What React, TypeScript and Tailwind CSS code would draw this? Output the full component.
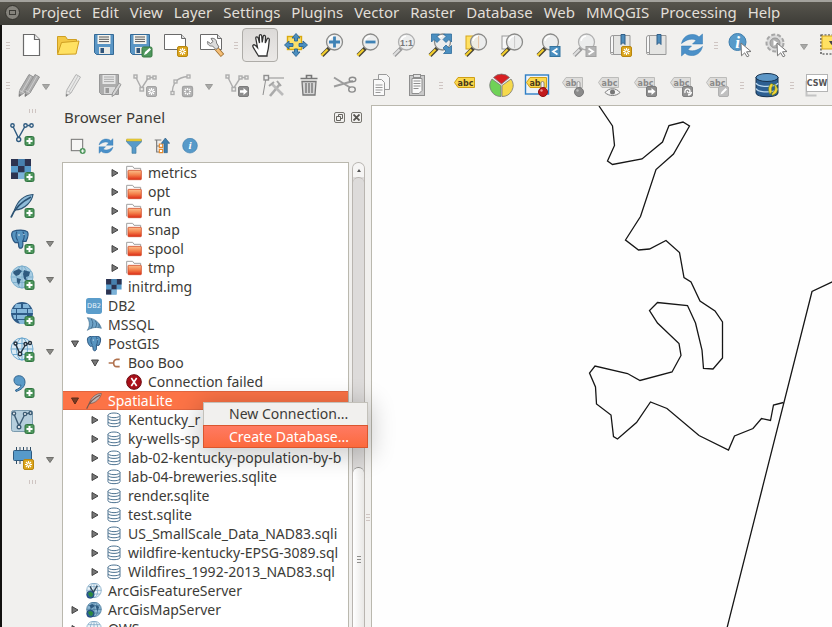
import React from "react";

type Children = { children?: React.ReactNode };

/* ---------- shared icon parts, all drawn on a 24 unit grid ---------- */

function Svg({ children, small }: Children & { small?: boolean }) {
  return (
    <svg viewBox="0 0 24 24" className={small ? "size-4 shrink-0" : "size-6 shrink-0 overflow-visible"} fill="none" aria-hidden="true">
      {children}
    </svg>
  );
}

function PlusBadge() {
  return (
    <g>
      <rect x="15" y="14.5" width="9" height="9" rx="1.5" fill="#4e965c" stroke="#2f7340" />
      <path d="M19.5 16v6M16.500 19h6" stroke="#fff" strokeWidth="2" />
    </g>
  );
}

function StarBadge({ gray }: { gray?: boolean }) {
  return (
    <g>
      <rect x="13.5" y="13.5" width="10" height="10" rx="1.5" fill={gray ? "#b4b4b4" : "#dba51c"} stroke={gray ? "#a3a3a3" : "#b98710"} />
      <path d="M18.5 15v7M15 18.5h7M16 16l5 5M21 16l-5 5" stroke="#fff" strokeWidth="1.1" />
      <circle cx="18.5" cy="18.5" r="1.1" fill={gray ? "#b4b4b4" : "#dba51c"} />
    </g>
  );
}

function ArrowBadge() {
  return (
    <g>
      <rect x="13.5" y="13.5" width="10" height="10" rx="1.5" fill="#8d8d8d" stroke="#7c7c7c" />
      <path d="M15 17.3h3.5v-2.2l4 3.4-4 3.4v-2.2H15z" fill="#fff" />
    </g>
  );
}

function Lens({ gray, children }: Children & { gray?: boolean }) {
  return (
    <g>
      <path d="M9.5 15 2 22.5" stroke={gray ? "#9b9b9b" : "#4a4636"} strokeWidth="4" />
      <path d="M7.5 16.5 1.5 22.5" stroke={gray ? "#dedede" : "#f4cf2c"} strokeWidth="2.2" />
      <circle cx="14.5" cy="9" r="8" fill="#eceded" fillOpacity="0.92" stroke={gray ? "#b0b0b0" : "#8a8a88"} strokeWidth="1.3" />
      <path d="M9 8a6 6 0 0 1 5-5" stroke="#fff" strokeWidth="1.5" />
      {children}
    </g>
  );
}

function Floppy({ gray }: { gray?: boolean }) {
  return (
    <g>
      <path d="M2.5 1.5h19v20h-17l-2-2z" fill={gray ? "#adadad" : "#5a96c5"} stroke={gray ? "#979797" : "#356a96"} />
      <rect x="5.5" y="2" width="13" height="9" fill={gray ? "#e6e6e6" : "#f6f4ee"} />
      <path d="M7 4h10M7 6.3h10M7 8.6h10" stroke={gray ? "#aaa" : "#555"} />
      <rect x="7" y="14" width="11" height="7" fill={gray ? "#dadada" : "#e9e9e4"} />
      <rect x="8.5" y="15" width="3.5" height="5" fill={gray ? "#999" : "#31557a"} />
    </g>
  );
}

function Pencil({ dx = 0, dark }: { dx?: number; dark?: boolean }) {
  return (
    <g transform={`translate(${dx} 0)`}>
      <path d="M14 1.5 18.5 4 9 20l-5 3.5.5-6z" fill={dark ? "#adadad" : "#e8e8e7"} stroke={dark ? "#949494" : "#b4b4b4"} />
      <path d="M16 3 7 19M4.5 17.5 9 20" stroke={dark ? "#cdcdcd" : "#c4c4c4"} />
      <path d="m4 23.500.3-2.600 2 .8z" fill="#777" />
    </g>
  );
}

function Refresh() {
  return (
    <g fill="#4b90c8" stroke="#2f76b0" strokeWidth="0.5">
      <path d="M1.500 10.500C3 4 8 1 13 1.500c3 .2 4.500 1 6 2.500L22.500 1v10h-10l3.500-3.500C13 5 7 6 1.500 10.500z" />
      <path d="M22.500 13.500c-1.500 6.500-6.500 9.500-11.500 9-3-.2-4.500-1-6-2.500L1.500 23V13h10L8 16.500c3 2.500 9 1.500 14.500-3z" />
    </g>
  );
}

function InfoDisc({ r = 8.5, cx = 10 }: { r?: number; cx?: number }) {
  return (
    <g>
      <circle cx={cx} cy={r + 0.5} r={r} fill="#579ac9" stroke="#3f7fae" />
      <text x={cx} y={r + 6} textAnchor="middle" fontSize="17" fontStyle="italic" fontWeight="700" fontFamily="Liberation Serif, serif" fill="#fff">i</text>
    </g>
  );
}

function Cursor() {
  return <path d="m13 10 10 8.500-4.500.3 2.500 4-2 1-2.300-4-3.200 3z" fill="#fff" stroke="#777" />;
}

function Bookmark() {
  return (
    <g>
      <path d="M5.500 2.500H22v19H5.500z" fill="#e5e5e3" stroke="#999" />
      <path d="M5.500 2.500C3 2.500 2.500 3.500 2.500 5v14.500h3z" fill="#f8f8f8" stroke="#999" />
      <path d="M2.500 19.500c0 2 1 2 3 2h2" stroke="#999" />
      <path d="M13 1.500h4v10l-2-2-2 2z" fill="#4d8cbb" stroke="#315f88" />
    </g>
  );
}

function Tag({ gray, word }: { gray?: boolean; word: string }) {
  return (
    <g>
      <path d="M1.500 9.500 5 4.500h16.500v10H5z" fill={gray ? "#dedddb" : "#fbd84d"} stroke={gray ? "#bcbcba" : "#d0a016"} />
      <text x={word === "ab" ? 10 : 12.5} y="12.500" textAnchor="middle" fontSize="8" fontWeight="700" fontFamily="DejaVu Sans, sans-serif" fill={gray ? "#8a8a8a" : "#4a3a1a"}>
        {word}
      </text>
    </g>
  );
}

function VectorLine({ color, fill = "#f1f0ee" }: { color: string; fill?: string }) {
  return (
    <g stroke={color} strokeWidth="1.400">
      <path d="M2.500 3.500 8.500 16 15.500 3.500H21" />
      <g fill={fill}>
        <circle cx="2.500" cy="3.500" r="1.700" />
        <circle cx="8.700" cy="17.500" r="2" />
        <circle cx="15.500" cy="3.500" r="1.700" />
        <circle cx="21.500" cy="3.500" r="1.700" />
      </g>
    </g>
  );
}

function GrayVectorLine() {
  return (
    <g stroke="#adadad" strokeWidth="1.400">
      <path d="M2.500 3.500 8.500 15.500 15.500 4.500H21" />
      <g fill="#f1f0ee">
        <rect x="1" y="2" width="3" height="3" />
        <rect x="7" y="14.500" width="3.500" height="3.500" />
        <rect x="14" y="3" width="3" height="3" />
        <rect x="20" y="3" width="3" height="3" />
      </g>
    </g>
  );
}

function Globe({ fill = "#dcebf4", line = "#4482ad" }: { fill?: string; line?: string }) {
  return (
    <g stroke={line}>
      <circle cx="12" cy="11" r="11" fill={fill} />
      <ellipse cx="12" cy="11" rx="5.500" ry="11" />
      <path d="M1 11h22M3 5.500h18M3 16.500h18M12 0v22" />
    </g>
  );
}

function Raster() {
  return (
    <g>
      <path d="M1 1h20v13.500h-6.500V21H1z" fill="#579ac9" />
      <path d="M1 1h7v7H1zM14.500 1H21v7h-6.500zM8 8h6.500v6.500H8zM1 14.500h7V21H1z" fill="#2d3350" />
      <path d="M8 1h6.500v7H8z" fill="#4780ae" />
      <path d="M8 14.500h6.500V21H8z" fill="#7cb2d8" />
    </g>
  );
}

function Elephant() {
  return (
    <g>
      <path d="M4 1.500C9-.5 18-.5 21 2c2 2.500.5 8-1.500 12h-4c.5 4 .5 7-1.500 8-2.500.8-3.500-1-3.500-4l-.5-3-3.500.5C3 13 0 4 4 1.500z" fill="#5794c0" stroke="#2b5680" strokeWidth="1.500" />
      <path d="M8.500 2C6.500 5 7 10 9.500 13M15.500 2c2.500 3 2 8 0 12" stroke="#2b5680" strokeWidth="1.300" />
      <circle cx="11" cy="6" r=".9" fill="#fff" />
      <circle cx="17" cy="5.500" r=".7" fill="#fff" />
    </g>
  );
}

function Feather({ fill, line }: { fill: string; line: string }) {
  return (
    <g>
      <path d="M23 .5C15 1 8 6 4.500 16c4 0 9-1.500 13-5.500 3-3 5-6 5.500-10z" fill={fill} stroke={line} strokeWidth="1.100" />
      <path d="M21 3C13 7 5 13 1 23.500" stroke={line} strokeWidth="1.800" />
    </g>
  );
}

function PaintPot({ gray }: { gray?: boolean }) {
  return (
    <g>
      <rect x="16" y="8.500" width="3" height="9" rx="1.500" fill={gray ? "#eee" : "#f6eded"} stroke={gray ? "#888" : "#777"} strokeWidth=".8" />
      <circle cx="18" cy="19" r="4.500" fill={gray ? "#8b8b8b" : "#c21a1d"} stroke={gray ? "#777" : "#8d0e10"} />
      <circle cx="16.500" cy="17.500" r="1.200" fill={gray ? "#bbb" : "#f09a9a"} />
    </g>
  );
}

/* ---------- toolbar definitions ---------- */

type Tool = { name: string; art: React.ReactNode; pressed?: boolean };

const fileTools: Tool[] = [
  {
    name: "New project",
    art: (
      <g stroke="#6a6a6a" strokeWidth="1.200">
        <path d="M3.500 1.500h11l5 5v16h-16z" fill="#fff" />
        <path d="M14.500 1.500v5h5" fill="#eee" />
      </g>
    ),
  },
  {
    name: "Open project",
    art: (
      <g stroke="#cf9f22">
        <path d="M1.500 20.500v-17h8l2 3h9v4" fill="#f3c845" />
        <path d="M5.500 9.500 23 8l-3 13-18.500.5z" fill="#ffe162" />
      </g>
    ),
  },
  { name: "Save project", art: <Floppy /> },
  {
    name: "Save project as",
    art: (
      <g>
        <Floppy />
        <rect x="14" y="14" width="10" height="10" rx="1.500" fill="#4e965c" stroke="#35793f" />
        <path d="m16 22 1-3 4.500-4 1.500 1.500-4.500 4.500z" fill="#fff" />
      </g>
    ),
  },
  {
    name: "New layout",
    art: (
      <g>
        <path d="M.5 1.500h17l4 4v11H.5z" fill="#fff" stroke="#6a6a6a" />
        <path d="M17.500 1.500v4h4" fill="#ddd" stroke="#6a6a6a" />
        <StarBadge />
      </g>
    ),
  },
  {
    name: "Layout manager",
    art: (
      <g>
        <path d="M.5 1.500h17l4 4v11H.5z" fill="#fff" stroke="#6a6a6a" />
        <path d="M17.500 1.500v4h4" fill="#ddd" stroke="#6a6a6a" />
        <path d="m16 15 6.500 7.500" stroke="#9a6a2a" strokeWidth="4.500" />
        <path d="m16 15 6 7" stroke="#f5bf78" strokeWidth="3" />
        <path d="M11 5.500c3-1 6 1.500 5.500 4.500l2.500 4-3 2.500-3.500-3.500c-3 .5-5.500-1.500-5-4.500l3 2 2.500-2z" fill="#dcdcdc" stroke="#777" />
      </g>
    ),
  },
];

const navTools: Tool[] = [
  {
    name: "Pan map",
    pressed: true,
    art: (
      <path
        d="M10.500 23 6.500 16.500C5 14 4 12.500 5.500 11.800c1.500-.4 2.500 1 4 2.700L7.800 5.500C7.500 3.600 9.600 3.300 10.200 5l1.300 5L11.300 3c0-1.800 2.200-1.800 2.400 0l.5 6.500 1-6.200c.4-1.500 2.400-1.200 2.300.6L17.300 10l1.800-4c.8-1.500 2.400-.8 2.200.9L20.500 14c-.3 4-1.500 5-1.500 9z"
        fill="#fff"
        stroke="#333"
        strokeWidth="1.300"
      />
    ),
  },
  {
    name: "Pan to selection",
    art: (
      <g>
        <rect x="3.500" y="3.500" width="14" height="13" fill="#fde06a" stroke="#d9a90f" strokeWidth="1.400" />
        <g fill="#4b8fc0" stroke="#2c6490" strokeWidth=".9">
          <path d="M12 .5 16 5h-2.500v3h-3V5H8zM12 23.500 8 19h2.500v-3h3v3H16zM.5 12 5 8v2.500h4v3H5V16zM23.500 12 19 8v2.500h-4v3h4V16z" />
        </g>
      </g>
    ),
  },
  { name: "Zoom in", art: <Lens><path d="M14.500 3.500v11M9 9h11" stroke="#3f82b5" strokeWidth="2.800" /></Lens> },
  { name: "Zoom out", art: <Lens><path d="M9.500 9h10" stroke="#3f82b5" strokeWidth="2.800" /></Lens> },
  {
    name: "Zoom to native resolution",
    art: (
      <Lens gray>
        <text x="14.500" y="12.500" textAnchor="middle" fontSize="9" fontWeight="700" fontFamily="Liberation Sans, sans-serif" fill="#777">1:1</text>
      </Lens>
    ),
  },
  {
    name: "Zoom full",
    art: (
      <g>
        <Lens />
        <g fill="#4b8fc0" stroke="#2f6c9c" strokeWidth=".8">
          <path d="M3.500 1h8L9 3.500l3 3L9 9.500l-3-3L3.500 9zM23.500 1v8L21 6.500l-3 3-3-3 3-3L15.500 1zM23.500 20.500h-8L18 18l-3-3 3-3 3 3 2.500-2.500z" />
        </g>
      </g>
    ),
  },
  {
    name: "Zoom to selection",
    art: (
      <g>
        <rect x="2" y="3" width="13" height="13" fill="#ffe162" stroke="#d6a51d" />
        <Lens><path d="M14.500 3v12" stroke="#e9c7a8" /></Lens>
      </g>
    ),
  },
  {
    name: "Zoom to layer",
    art: (
      <g>
        <rect x="2" y="3" width="13" height="13" fill="#f7f7f7" stroke="#999" />
        <Lens><path d="M14.500 3v12" stroke="#ccc" /></Lens>
      </g>
    ),
  },
  {
    name: "Zoom last",
    art: (
      <g>
        <Lens />
        <rect x="14" y="13.500" width="10" height="10" fill="#4b8fc0" stroke="#35749f" />
        <path d="m21.500 15.500-4.500 3 4.500 3" stroke="#fff" strokeWidth="1.800" />
      </g>
    ),
  },
  {
    name: "Zoom next",
    art: (
      <g>
        <Lens gray />
        <rect x="14" y="13.500" width="10" height="10" fill="#b4b4b4" stroke="#a2a2a2" />
        <path d="m16.500 15.500 4.500 3-4.500 3" stroke="#fff" strokeWidth="1.800" />
      </g>
    ),
  },
  { name: "New bookmark", art: <g><Bookmark /><StarBadge /></g> },
  { name: "Show bookmarks", art: <Bookmark /> },
  { name: "Refresh", art: <Refresh /> },
];

const infoTools: Tool[] = [
  { name: "Identify features", art: <g><InfoDisc r={8.5} cx={9.5} /><Cursor /></g> },
  {
    name: "Run feature action",
    art: (
      <g>
        <circle cx="11" cy="10" r="8.500" fill="#dcdcdc" stroke="#a6a6a6" strokeWidth="2" strokeDasharray="4 2" />
        <circle cx="11" cy="10" r="5" fill="#b0b0b0" stroke="#999" />
        <path d="m9.500 7 4.500 3-4.500 3z" fill="#fff" />
        <Cursor />
      </g>
    ),
  },
];

const selectTool: Tool = {
  name: "Select features",
  art: (
    <g>
      <rect x="1" y="2" width="22" height="19" stroke="#333" strokeWidth="1.200" strokeDasharray="2 1.500" />
      <rect x="2" y="3" width="20" height="13" fill="#ffe162" stroke="#d6a51d" />
      <path d="M9 8h5l-2.500 4z" fill="#444" />
    </g>
  ),
};

const digitizeTools: Tool[] = [
  { name: "Toggle editing", art: <Pencil dx={1} /> },
  { name: "Save layer edits", art: <g><Floppy gray /><path d="m22 10 2 1.500-6 10-3 2 .5-3.500z" fill="#d5d5d5" stroke="#999" /></g> },
  { name: "Add feature", art: <g><GrayVectorLine /><StarBadge gray /></g> },
  {
    name: "Add circular string",
    art: (
      <g stroke="#adadad" strokeWidth="1.300">
        <path d="M3.500 20C3 11 8 4 19 3.500" />
        <g fill="#f1f0ee">
          <rect x="2" y="18.500" width="3" height="3" />
          <rect x="5" y="7" width="3" height="3" />
          <rect x="18" y="2" width="3" height="3" />
        </g>
        <StarBadge gray />
      </g>
    ),
  },
];

const editTools: Tool[] = [
  { name: "Move feature", art: <g><GrayVectorLine /><ArrowBadge /></g> },
  {
    name: "Node tool",
    art: (
      <g stroke="#8f8f8f">
        <path d="M5 5 2 22M5 5h18" />
        <rect x="3" y="2.500" width="4.500" height="4.500" fill="#eee" strokeWidth="1.400" />
        <path d="m9 23 10-12" stroke="#aaa" strokeWidth="2.600" />
        <path d="m11 11 11 11" stroke="#bbb" strokeWidth="2.600" />
        <path d="m16 8 4 5M8 13l5-4" stroke="#a5a5a5" strokeWidth="2" />
      </g>
    ),
  },
  {
    name: "Delete selected",
    art: (
      <g stroke="#777" strokeWidth="1.300">
        <path d="M5 8.500h14L18 22H6z" fill="#d5d5d5" />
        <path d="M9 10v10M12 10v10M15 10v10" strokeWidth="1.400" />
        <path d="M3.500 5.500h17M9.500 5V2.500h5V5" strokeWidth="1.600" />
      </g>
    ),
  },
  {
    name: "Cut features",
    art: (
      <g>
        <path d="M1 4.500 17 14.500M1 13.500l19-5.500" stroke="#9c9c9c" strokeWidth="2" />
        <ellipse cx="19.500" cy="6.500" rx="3.300" ry="2.200" stroke="#8c8c8c" strokeWidth="1.400" />
        <ellipse cx="19" cy="16.500" rx="3.300" ry="2.600" stroke="#8c8c8c" strokeWidth="1.400" />
      </g>
    ),
  },
  {
    name: "Copy features",
    art: (
      <g stroke="#9a9a9a">
        <path d="M9.500 1.500h8l3 3v12h-11z" fill="#f6f6f6" />
        <path d="M4.500 6.500h8l3 3v13h-11z" fill="#fafafa" />
        <path d="M6.500 12h7M6.500 14.500h7M6.500 17h7M6.500 19.500h5" />
      </g>
    ),
  },
  {
    name: "Paste features",
    art: (
      <g stroke="#8e8e8e">
        <rect x="4.500" y="2.500" width="15" height="20" fill="#c9c9c9" />
        <path d="M7 5.500h10v12l-3 3H7z" fill="#fafafa" />
        <rect x="8.500" y="1.500" width="7" height="3" fill="#e2e2e2" />
        <path d="M8.500 8h7M8.500 10.500h7M8.500 13h7M8.500 15.500h5" />
      </g>
    ),
  },
];

const labelTools: Tool[] = [
  { name: "Layer labeling options", art: <Tag word="abc" /> },
  {
    name: "Layer diagram options",
    art: (
      <g stroke="#777" strokeWidth=".8">
        <path d="M12 12.500V23.500A11 11 0 0 1 3 6z" fill="#6fd257" />
        <path d="M13 12.500V23.500A11 11 0 0 0 22 6z" fill="#f6d94c" />
        <path d="M12.500 11 4.500 4.500a11 11 0 0 1 16 0z" fill="#d81f22" />
      </g>
    ),
  },
  {
    name: "Highlight pinned labels",
    art: <g><rect x=".5" y="2" width="23" height="19" fill="#eef3f8" stroke="#2f7fc6" strokeWidth="1.400" /><Tag word="ab" /><PaintPot /></g>,
  },
  { name: "Pin labels", art: <g><Tag gray word="ab" /><PaintPot gray /></g> },
  {
    name: "Show or hide labels",
    art: (
      <g>
        <Tag gray word="abc" />
        <path d="M8 19.500c4-5 11-5 15 0-4 4-11 4-15 0z" fill="#f4f4f4" stroke="#7c7c7c" />
        <circle cx="15.500" cy="19" r="2.500" fill="#777" />
      </g>
    ),
  },
  { name: "Move label", art: <g><Tag gray word="abc" /><ArrowBadge /></g> },
  {
    name: "Rotate label",
    art: (
      <g>
        <Tag gray word="abc" />
        <rect x="13.500" y="13.500" width="10" height="10" rx="1.500" fill="#929292" stroke="#808080" />
        <path d="M16 20c-1-5 5-5 5-2s-3 2-2.500 0M19 22c2 0 3-1 3.500-3" stroke="#fff" strokeWidth="1.300" />
      </g>
    ),
  },
  {
    name: "Change label",
    art: (
      <g>
        <Tag gray word="abc" />
        <rect x="13.500" y="13.500" width="10" height="10" rx="1.500" fill="#c0c0c0" stroke="#b0b0b0" />
        <path d="m15.500 21.500 1-2.500 4-4 1.500 1.500-4 4z" fill="#fff" />
      </g>
    ),
  },
];

const dbManager: Tool = {
  name: "DB Manager",
  art: (
    <g>
      <path d="M1 4v16c0 5 22 5 22 0V4z" fill="#2d5f91" stroke="#16324f" />
      <ellipse cx="12" cy="4.500" rx="11" ry="4" fill="#5c96c6" stroke="#16324f" />
      <path d="M1 10c2 4.500 20 4.500 22 0M1 15.500c2 4.500 20 4.500 22 0" stroke="#b9d7ef" strokeWidth="1.300" />
      <path d="M16 10.500c-3 3-3 7-1 11l2-3c-1-3 0-5 1.500-7zM19 11c4 2 4 6 2.500 9l-4 2.500-1-1.500 3-3.500c.8-2 .5-4-.5-6.500z" fill="#f5d534" stroke="#5d7a1d" strokeWidth=".6" />
    </g>
  ),
};

const cswTool: Tool = {
  name: "MetaSearch",
  art: (
    <g>
      <path d="M1.500 8v14.500h10" stroke="#c4c4c4" strokeWidth="2" />
      <rect x="1.500" y="1.500" width="21" height="17" fill="#fff" stroke="#b4b4b4" />
      <text x="12" y="13" textAnchor="middle" fontSize="8" fontWeight="700" fontFamily="DejaVu Sans, sans-serif" fill="#555">CSW</text>
    </g>
  ),
};

const layerTools: (Tool & { menu?: boolean })[] = [
  { name: "Add vector layer", art: <g><VectorLine color="#2f5b80" /><PlusBadge /></g> },
  { name: "Add raster layer", art: <g><Raster /><PlusBadge /></g> },
  { name: "Add SpatiaLite layer", art: <g><Feather fill="#8ebbd8" line="#2b5273" /><PlusBadge /></g> },
  { name: "Add PostGIS layer", menu: true, art: <g><g transform="scale(.82)"><Elephant /></g><PlusBadge /></g> },
  {
    name: "Add WMS layer",
    menu: true,
    art: (
      <g>
        <Globe fill="#a8cde3" line="#7fb0cd" />
        <path d="M4 5l5-2 3 2-3 4-3 1-3-3zM14 4l6 2-1 4-3 1 1 4-3-2-1-5zM7 12l4 1-2 6-2-3z" fill="#2f5b80" />
        <PlusBadge />
      </g>
    ),
  },
  {
    name: "Add WCS layer",
    art: (
      <g>
        <circle cx="12" cy="11" r="11" fill="#2d5a86" />
        <path d="M6 2h5v4H4zM13 2h5l2 4h-7zM2 7h4v4H1zM7 7h10v4H7zM18 7h4l1 4h-5zM3 13h3v4H4zM7 13h10v4H7zM8 18h8l-2 4h-4z" fill="#86b8db" />
        <PlusBadge />
      </g>
    ),
  },
  {
    name: "Add WFS layer",
    menu: true,
    art: (
      <g>
        <Globe line="#6fa9cf" />
        <g stroke="#24323f" strokeWidth="1.400">
          <path d="m5.500 6 4.500 10 6-10 4-1" />
          <g fill="#fff">
            <circle cx="5.500" cy="5.500" r="1.500" />
            <circle cx="10" cy="16" r="1.700" />
            <circle cx="15.500" cy="6" r="1.500" />
            <circle cx="20" cy="5" r="1.500" />
          </g>
        </g>
        <PlusBadge />
      </g>
    ),
  },
  {
    name: "Add delimited text layer",
    art: (
      <g>
        <path d="M4 6c0-6 11-6 11 2 0 5-4 8-9 9.500l-.5-1.500c3-1 5.500-3 5.500-5C7 12 4 10 4 6z" fill="#5a9ac8" stroke="#32648e" />
        <PlusBadge />
      </g>
    ),
  },
  {
    name: "Add virtual layer",
    art: (
      <g>
        <rect x="1.500" y=".5" width="21" height="21" rx="2" fill="#b6cfdd" stroke="#7b9bae" />
        <g stroke="#3c5c74" strokeWidth="1.400">
          <path d="M4 4l5 12 6-12 5-1" />
          <g fill="#fff">
            <circle cx="4" cy="3.500" r="1.600" />
            <circle cx="9" cy="17" r="1.800" />
            <circle cx="15" cy="4" r="1.600" />
            <circle cx="20.500" cy="3" r="1.500" />
          </g>
        </g>
        <PlusBadge />
      </g>
    ),
  },
  {
    name: "New memory layer",
    menu: true,
    art: (
      <g>
        <path d="M6.500 1v17M10 1v17M13.500 1v17M17 1v17M20.500 1v17" stroke="#2f4d66" />
        <rect x="3.500" y="4.500" width="18" height="10" rx="1" fill="#579ac9" stroke="#2f5b80" />
        <StarBadge />
      </g>
    ),
  },
];

/* ---------- controls ---------- */

function ToolButton({ tool }: { tool: Tool }) {
  return (
    <button
      type="button"
      aria-label={tool.name}
      aria-pressed={tool.pressed}
      className={
        tool.pressed
          ? "flex h-[34px] w-9 shrink-0 items-center justify-center rounded border border-[#aeaca8] bg-linear-to-b from-[#dcdad8] to-[#ebe9e7]"
          : "flex h-[34px] w-9 shrink-0 items-center justify-center"
      }
    >
      <Svg>{tool.art}</Svg>
    </button>
  );
}

function Tools({ items }: { items: Tool[] }) {
  return (
    <>
      {items.map((tool) => (
        <ToolButton key={tool.name} tool={tool} />
      ))}
    </>
  );
}

function Grip({ wide }: { wide?: boolean }) {
  return (
    <span className={wide ? "flex w-[14px] shrink-0 flex-col items-center gap-[2px]" : "flex w-3 shrink-0 flex-col items-center gap-[2px]"}>
      <span className="h-px w-1 bg-[#cfc5c2]" />
      <span className="h-px w-1 bg-[#cfc5c2]" />
      <span className="h-px w-1 bg-[#cfc5c2]" />
    </span>
  );
}

function SideGrip() {
  return (
    <span className="flex h-[11px] items-center justify-center gap-[2px]">
      <span className="h-1 w-px bg-[#cfc5c2]" />
      <span className="h-1 w-px bg-[#cfc5c2]" />
      <span className="h-1 w-px bg-[#cfc5c2]" />
    </span>
  );
}

function DropArrow({ name, muted }: { name: string; muted?: boolean }) {
  return (
    <button type="button" aria-label={name} className="flex w-5 shrink-0 items-center justify-center pt-[3px]">
      <svg viewBox="0 0 8 6" className="h-[6px] w-2" aria-hidden="true">
        <path d="M.5.5h7L4 5.500z" fill={muted ? "#a9a9a7" : "#8b8b88"} stroke={muted ? "#9a9a98" : "#70706c"} />
      </svg>
    </button>
  );
}

const menus = ["Project", "Edit", "View", "Layer", "Settings", "Plugins", "Vector", "Raster", "Database", "Web", "MMQGIS", "Processing", "Help"];

function MenuBar() {
  return (
    <header className="flex h-[25px] shrink-0 items-center border-t-2 border-[#a3a29d] bg-linear-to-b from-[#57554d] to-[#3d3c37] pb-[3px] text-[15px] text-[#e2dfd8]">
      <button type="button" aria-label="Restore window" className="ml-[5px] flex size-[15px] shrink-0 items-center justify-center rounded-full border border-[#33322d] bg-[#85837c]">
        <span className="h-[5px] w-[7px] border border-[#3c3b36]" />
      </button>
      <nav className="ml-3 flex gap-[11px]">
        {menus.map((menu) => (
          <button key={menu} type="button" className="leading-5">
            {menu}
          </button>
        ))}
      </nav>
    </header>
  );
}

/* ---------- browser tree ---------- */

type Kind = "folder" | "raster" | "db2" | "mssql" | "postgis" | "link" | "error" | "feather" | "db" | "arcF" | "arcM" | "ows";
type Node = { label: string; level: 1 | 2 | 3; kind: Kind; open?: boolean; closed?: boolean; selected?: boolean };

const nodes: Node[] = [
  { label: "metrics", level: 3, kind: "folder", closed: true },
  { label: "opt", level: 3, kind: "folder", closed: true },
  { label: "run", level: 3, kind: "folder", closed: true },
  { label: "snap", level: 3, kind: "folder", closed: true },
  { label: "spool", level: 3, kind: "folder", closed: true },
  { label: "tmp", level: 3, kind: "folder", closed: true },
  { label: "initrd.img", level: 2, kind: "raster" },
  { label: "DB2", level: 1, kind: "db2" },
  { label: "MSSQL", level: 1, kind: "mssql" },
  { label: "PostGIS", level: 1, kind: "postgis", open: true },
  { label: "Boo Boo", level: 2, kind: "link", open: true },
  { label: "Connection failed", level: 3, kind: "error" },
  { label: "SpatiaLite", level: 1, kind: "feather", open: true, selected: true },
  { label: "Kentucky_r", level: 2, kind: "db", closed: true },
  { label: "ky-wells-sp", level: 2, kind: "db", closed: true },
  { label: "lab-02-kentucky-population-by-b", level: 2, kind: "db", closed: true },
  { label: "lab-04-breweries.sqlite", level: 2, kind: "db", closed: true },
  { label: "render.sqlite", level: 2, kind: "db", closed: true },
  { label: "test.sqlite", level: 2, kind: "db", closed: true },
  { label: "US_SmallScale_Data_NAD83.sqli", level: 2, kind: "db", closed: true },
  { label: "wildfire-kentucky-EPSG-3089.sql", level: 2, kind: "db", closed: true },
  { label: "Wildfires_1992-2013_NAD83.sql", level: 2, kind: "db", closed: true },
  { label: "ArcGisFeatureServer", level: 1, kind: "arcF" },
  { label: "ArcGisMapServer", level: 1, kind: "arcM", closed: true },
  { label: "OWS", level: 1, kind: "ows", closed: true },
];

const nodeArt: Record<Kind, React.ReactNode> = {
  folder: (
    <g>
      <linearGradient id="folder-front" x1="0" y1="0" x2="0" y2="1">
        <stop offset="0" stopColor="#fbc08d" />
        <stop offset="0.5" stopColor="#f4804a" />
        <stop offset="1" stopColor="#dd2b16" />
      </linearGradient>
      <path d="M1 20V2h9l2 3h10v4" fill="#fff" stroke="#a0a0a0" strokeWidth="1.500" />
      <rect x="3" y="8" width="20" height="14" rx="1" fill="url(#folder-front)" stroke="#d04a2a" strokeWidth="1.200" />
    </g>
  ),
  raster: (
    <g transform="translate(-1 -1) scale(1.16)">
      <Raster />
    </g>
  ),
  db2: (
    <g>
      <rect x="0" y="0" width="24" height="24" rx="4" fill="#5b9dcb" />
      <text x="12" y="15.500" textAnchor="middle" fontSize="10" fontFamily="DejaVu Sans, sans-serif" fill="#e8f3fa">DB2</text>
    </g>
  ),
  mssql: (
    <g stroke="#3f6c8e">
      <path d="M2 1c10 1 18 6 21 16-6-2-14-2-21 3 4-6 4-13 0-19z" fill="#6fa3c8" />
      <path d="M8 3c3 5 3 9 0 14M14 6c2.500 3 2.500 6 0 10M19 10c1 2 1 4 0 6" strokeWidth="1.400" />
    </g>
  ),
  postgis: <Elephant />,
  link: <path d="M4 12h7M20.500 6.500H16c-3 0-4.500 3-4.500 5.500s1.500 5.500 4.500 5.500h4.500" stroke="#b0714d" strokeWidth="2.400" />,
  error: (
    <g>
      <circle cx="12" cy="12" r="11" fill="#a90f19" stroke="#6d0b10" strokeWidth="1.500" />
      <path d="m8 6 8 12M16 6 8 18" stroke="#fff" strokeWidth="2.400" />
    </g>
  ),
  feather: <Feather fill="#bdb4b4" line="#77584e" />,
  db: (
    <g stroke="#4d7391" strokeWidth="1.500">
      <path d="M3 5v14c0 4 18 4 18 0V5" fill="#fff" />
      <ellipse cx="12" cy="5" rx="9" ry="3.500" fill="#fff" />
      <path d="M3 10c2 3.500 16 3.500 18 0M3 15c2 3.500 16 3.500 18 0" />
    </g>
  ),
  arcF: (
    <g>
      <Globe fill="#eef5f9" line="#6f9fc0" />
      <path d="m6 5 5 9 6-10" stroke="#33485a" strokeWidth="2" />
      <circle cx="6.500" cy="17.500" r="5.500" fill="#2d5f9a" stroke="#17406b" />
      <path d="M3 15l4-2 4 3-2 5-4-1z" fill="#2c8a3e" />
    </g>
  ),
  arcM: (
    <g>
      <Globe fill="#8db8d4" line="#3f6f92" />
      <path d="m5 5 5-2 3 3-5 4zM14 5l6 2-3 7z" fill="#2f5b80" />
      <circle cx="6.500" cy="17.500" r="5.500" fill="#2d5f9a" stroke="#17406b" />
      <path d="M3 15l4-2 4 3-2 5-4-1z" fill="#2c8a3e" />
    </g>
  ),
  ows: <Globe fill="#eef5f9" line="#6f9fc0" />,
};

const indents = { 1: "pl-[2px]", 2: "pl-[22px]", 3: "pl-[42px]" };

function TreeRow({ node }: { node: Node }) {
  return (
    <li
      role="treeitem"
      aria-selected={!!node.selected}
      className={`flex h-[19px] items-center whitespace-nowrap ${indents[node.level]} ${node.selected ? "border-y border-[#e2653f] bg-[#fc7346] text-white" : ""}`}
    >
      <span className="flex w-5 shrink-0 justify-center">
        {node.closed && (
          <svg viewBox="0 0 8 8" className="size-2" aria-hidden="true">
            <path d="M1 .5v7L7 4z" fill="#777" stroke="#444" />
          </svg>
        )}
        {node.open && (
          <svg viewBox="0 0 8 8" className="size-2" aria-hidden="true">
            <path d="M.5 1h7L4 7z" fill={node.selected ? "#7a3a22" : "#777"} stroke={node.selected ? "#5c2c1b" : "#444"} />
          </svg>
        )}
      </span>
      <span className="mr-[5px] flex w-[18px] shrink-0 justify-center">
        <Svg small>{nodeArt[node.kind]}</Svg>
      </span>
      <span>{node.label}</span>
    </li>
  );
}

function ScrollBar() {
  return (
    <div className="flex w-[13px] shrink-0 flex-col rounded-t-full border border-b-0 border-[#b9b5b0] bg-[#dddbda]" role="presentation">
      <button type="button" aria-label="Scroll up" className="flex h-[14px] w-full shrink-0 items-center justify-center rounded-t-full bg-[#f6f5f4]">
        <svg viewBox="0 0 4 3" className="h-[3px] w-1" aria-hidden="true">
          <path d="M2 0 4 3H0z" fill="#555" />
        </svg>
      </button>
      <div className="h-[290px] shrink-0 rounded-t-full border-t border-[#b9b5b0]" />
      <div className="flex flex-1 flex-col items-center gap-[2px] rounded-t-full border-t border-[#8f8e8b] bg-linear-to-r from-white to-[#e9e8e6] pt-[88px]">
        <span className="h-px w-1 bg-[#8f8e8b]" />
        <span className="h-px w-1 bg-[#8f8e8b]" />
        <span className="h-px w-1 bg-[#8f8e8b]" />
      </div>
    </div>
  );
}

const panelTools: Tool[] = [
  {
    name: "Add selected layers",
    art: (
      <g>
        <rect x="2" y="2" width="17" height="17" fill="#f6f6f5" stroke="#7a7a78" strokeWidth="1.600" />
        <circle cx="19" cy="19.500" r="4.500" fill="#4e965c" />
        <path d="M19 17v5M16.500 19.500h5" stroke="#fff" strokeWidth="1.600" />
      </g>
    ),
  },
  { name: "Refresh browser", art: <Refresh /> },
  {
    name: "Filter browser",
    art: (
      <g>
        <path d="M1 3h22v3l-8 8v9h-6v-9L1 6z" fill="#579ac9" stroke="#3b789f" />
        <path d="M1 1.500h22v3H1z" fill="#f2d43c" stroke="#bfa223" strokeWidth=".8" />
      </g>
    ),
  },
  {
    name: "Collapse all",
    art: (
      <g>
        <path d="M1 3h10M4 3v18h5M4 12h5" stroke="#777" strokeWidth="1.700" />
        <path d="M8 9h5v5H8zM8 17h5v5H8z" fill="#fff" stroke="#e58a2c" strokeWidth="1.700" />
        <path d="m17 0 6.500 8H20v14h-5V8h-4z" fill="#3f7fae" stroke="#2f5f86" />
      </g>
    ),
  },
  {
    name: "Properties",
    art: <InfoDisc r={11} cx={12} />,
  },
];

function BrowserPanel() {
  return (
    <section className="flex w-[303px] shrink-0 flex-col" aria-label="Browser">
      <div className="flex h-[25px] shrink-0 items-center gap-[6px] pr-[3px] pl-[2px]">
        <h2 className="mr-auto text-[15px]">Browser Panel</h2>
        <button type="button" aria-label="Float panel" className="flex size-[11px] items-center justify-center rounded-xs border border-[#77756f]">
          <svg viewBox="0 0 7 7" className="size-[7px]" fill="none" stroke="#66645f" aria-hidden="true">
            <path d="M.5 2.500h4v4h-4zM2.500 2.500v-2h4v4h-2" />
          </svg>
        </button>
        <button type="button" aria-label="Close panel" className="flex size-[11px] items-center justify-center rounded-xs border border-[#77756f]">
          <svg viewBox="0 0 7 7" className="size-[7px]" stroke="#55534e" strokeWidth="1.800" aria-hidden="true">
            <path d="m.5.500 6 6M6.500.500l-6 6" />
          </svg>
        </button>
      </div>
      <div className="flex h-8 shrink-0 items-center gap-3 pl-2">
        {panelTools.map((tool) => (
          <button key={tool.name} type="button" aria-label={tool.name}>
            <Svg small>{tool.art}</Svg>
          </button>
        ))}
      </div>
      <div className="flex min-h-0 flex-1 gap-[3px]">
        <ul role="tree" className="min-w-0 flex-1 overflow-hidden border border-b-0 border-[#bab8ae] bg-white">
          {nodes.map((node) => (
            <TreeRow key={node.label} node={node} />
          ))}
        </ul>
        <ScrollBar />
      </div>
    </section>
  );
}

function ContextMenu() {
  return (
    <div role="menu" className="absolute top-[402px] left-[203px] flex w-[165px] flex-col border border-[#c3c1ba] bg-[#f1f0ee] shadow-[0_4px_24px_4px_rgba(0,0,0,0.2)]">
      <button type="button" role="menuitem" className="h-[22px] pl-[25px] text-left leading-5 whitespace-nowrap">
        New Connection...
      </button>
      <button type="button" role="menuitem" className="-mx-px -mb-px h-[23px] border border-[#d9562f] bg-linear-to-b from-[#ff7a62] to-[#fc6a3c] pl-[25px] text-left leading-5 whitespace-nowrap text-white">
        Create Database...
      </button>
    </div>
  );
}

function MapCanvas() {
  return (
    <main className="min-w-0 flex-1 overflow-hidden border-t border-l border-[#bab8ae] bg-[#fefefe]">
      <svg className="size-full" fill="none" stroke="#161616" strokeWidth="1.300" role="img" aria-label="Map">
        <g transform="translate(-372 -106)">
          <path d="M599 106 612.500 126 614.500 145.500 607.500 161 612.500 164.500 642 159 662.500 142 669 125.500 683 122 689.500 126 673.500 154 656 169.500 640.500 216.500 625.500 240 638.500 250 649.500 249 666 240.500 679.500 252.500 684 277.500 691 282 700 301 715 311 722.500 322V358L713 369 703.500 368.500 702 350 695.500 323 687.500 305.500 657.500 302.500 649.500 310.500 657.500 323 679 343.500 681 355.500 672 372 640 380.500 627.500 373.500 595 366 589.500 373 595.500 387 596.500 404 611 415 613.500 436.500 617.500 439 636.500 422.500 650.500 402 667 408.500 699 435.500 728.500 450 734.500 436 753 428.500 761.500 418.500 770.500 420.500 773.500 405 783.500 402.500" />
          <path d="M834 281 812 291.500 727 628" />
        </g>
      </svg>
    </main>
  );
}

export default function App() {
  return (
    <div className="relative flex h-screen flex-col overflow-hidden bg-[#f1f0ee] font-['Noto_Sans',sans-serif] text-[14px] leading-[19px] text-[#3c3b37]">
      <MenuBar />
      <div className="flex min-h-0 flex-1 flex-col border-l-2 border-[#12110f]">
        <div role="toolbar" aria-label="Project and navigation" className="flex h-10 shrink-0 items-center overflow-hidden">
          <Grip />
          <Tools items={fileTools} />
          <Grip />
          <Tools items={navTools} />
          <Grip />
          <Tools items={infoTools} />
          <DropArrow name="Action menu" muted />
          <ToolButton tool={selectTool} />
        </div>
        <div role="toolbar" aria-label="Editing and labels" className="flex h-10 shrink-0 items-center overflow-hidden">
          <Grip />
          <button type="button" aria-label="Current edits" className="flex w-[41px] shrink-0 items-center pl-1">
            <Svg>
              <Pencil dx={-3} dark />
              <Pencil dx={3} dark />
            </Svg>
            <svg viewBox="0 0 8 6" className="mt-1 h-[6px] w-2" aria-hidden="true">
              <path d="M.5.5h7L4 5.500z" fill="#a9a9a7" stroke="#9a9a98" />
            </svg>
          </button>
          <Tools items={digitizeTools} />
          <DropArrow name="Curve menu" muted />
          <Tools items={editTools} />
          <Grip />
          <Tools items={labelTools} />
          <Grip wide />
          <ToolButton tool={dbManager} />
          <Grip wide />
          <ToolButton tool={cswTool} />
        </div>
        <div className="flex min-h-0 flex-1">
          <div role="toolbar" aria-label="Manage layers" className="flex w-[60px] shrink-0 flex-col">
            <SideGrip />
            {layerTools.map((tool) => (
              <div key={tool.name} className="flex h-9 shrink-0 items-center pl-[2px]">
                <ToolButton tool={tool} />
                {tool.menu && <DropArrow name={`${tool.name} menu`} />}
              </div>
            ))}
            <SideGrip />
          </div>
          <BrowserPanel />
          <div className="flex w-[6px] shrink-0 flex-col items-center pt-[409px]">
            <Grip />
          </div>
          <MapCanvas />
        </div>
      </div>
      <ContextMenu />
    </div>
  );
}
